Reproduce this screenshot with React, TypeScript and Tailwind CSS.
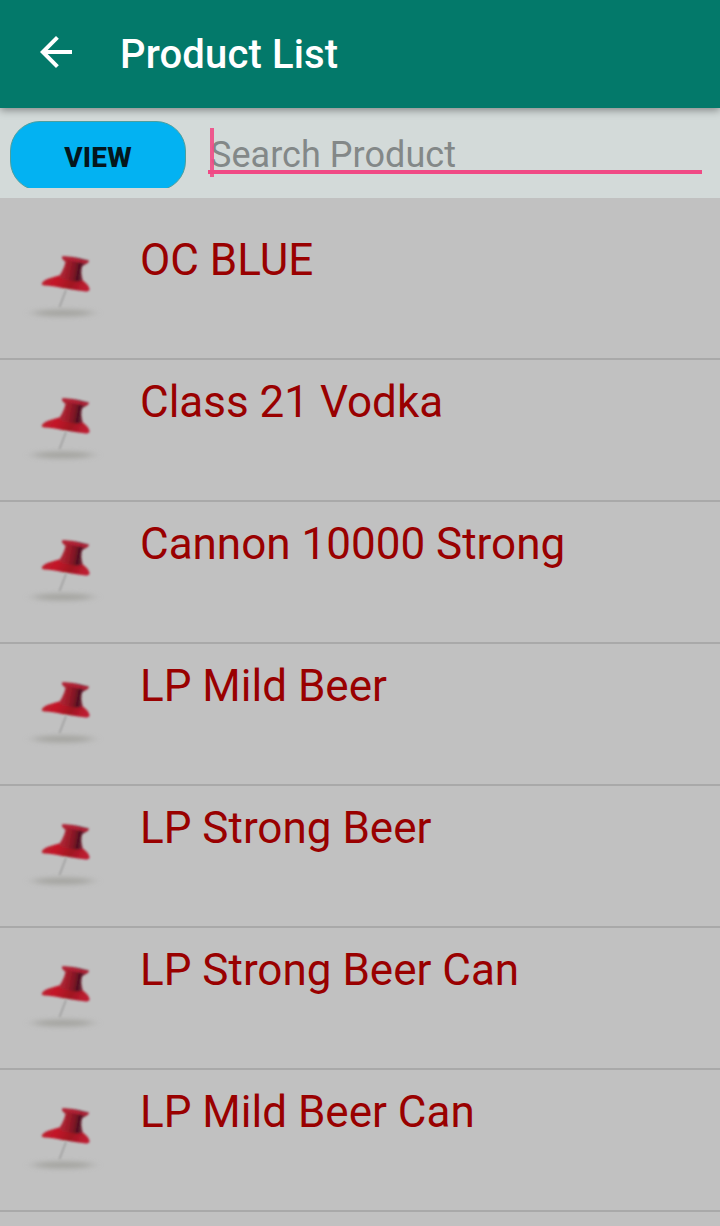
import React from 'react';

const products = [
  'OC BLUE',
  'Class 21 Vodka',
  'Cannon 10000 Strong',
  'LP Mild Beer',
  'LP Strong Beer',
  'LP Strong Beer Can',
  'LP Mild Beer Can',
];

const BackArrow: React.FC = () => (
  <svg className="h-8 w-8" viewBox="0 0 16 16" fill="#fff">
    <path d="M16 7H3.83l5.59-5.59L8 0 0 8l8 8 1.41-1.41L3.83 9H16V7z" />
  </svg>
);

// Shared gradients and blurs, defined once for every pin in the list
const PinDefs: React.FC = () => (
  <svg className="absolute h-0 w-0" aria-hidden="true">
    <defs>
      <linearGradient id="pinBase" x1="0" y1="0" x2="1" y2="0.2">
        <stop offset="0" stopColor="#b82834" />
        <stop offset="0.35" stopColor="#c41628" />
        <stop offset="0.7" stopColor="#a01222" />
        <stop offset="1" stopColor="#bc1e30" />
      </linearGradient>
      <linearGradient id="pinNeck" x1="0" y1="0" x2="1" y2="0.15">
        <stop offset="0" stopColor="#bc3040" />
        <stop offset="0.4" stopColor="#9e1c2a" />
        <stop offset="0.62" stopColor="#7a1424" />
        <stop offset="0.74" stopColor="#4a1020" />
        <stop offset="0.84" stopColor="#702434" />
        <stop offset="1" stopColor="#a03848" />
      </linearGradient>
      <filter id="pinSoft" x="-20%" y="-20%" width="140%" height="140%">
        <feGaussianBlur stdDeviation="1.25" />
      </filter>
      <filter id="pinShadow" x="-30%" y="-150%" width="160%" height="400%">
        <feGaussianBlur stdDeviation="6 2.4" />
      </filter>
    </defs>
  </svg>
);

const PushPin: React.FC = () => (
  <svg className="h-[90px] w-[90px] shrink-0" viewBox="0 0 90 90">
    <ellipse cx="43" cy="73" rx="30" ry="3.4" fill="#969690" opacity="0.65" filter="url(#pinShadow)" />
    <g filter="url(#pinSoft)">
      <path d="M46 50L39.500 67" stroke="#999" strokeWidth="1.4" fill="none" />
      <path d="M22 43C25 38.500 32 38 39 35.500L61 39C65 42.500 69.500 45.500 69.500 49.500C69 52 66 51.500 62 51C48 49.500 36 46 24 45.500C22 45 21.500 44.500 22 43Z" fill="url(#pinBase)" />
      <path d="M42 16.500C50 15.500 61 19 69 20.500C69 23 66 24 62.500 26C60.500 30 61.500 36 63 40.500C55 43 45 40 38.500 37C43 31 44.500 26 45.500 22C43 20 41.500 18.500 42 16.500Z" fill="url(#pinNeck)" />
      <path d="M42 16.800C50 16 61 19.500 69 21.500L66 23.500C58 22.500 49 20 43.500 19.500Z" fill="#b02236" />
    </g>
  </svg>
);

const App: React.FC = () => {
  return (
    <div className="relative flex h-[1226px] w-[720px] flex-col overflow-hidden bg-[#c1c1c1] font-['Roboto',sans-serif]">
      <PinDefs />

      <header className="z-10 flex h-[108px] shrink-0 items-center bg-[#03796a] pl-10 shadow-[0_2px_8px_rgba(0,0,0,0.4)]">
        <div className="-mt-1">
          <BackArrow />
        </div>
        <h1 className="ml-12 pt-[2px] text-[40px] font-medium leading-[48px] tracking-[0.15px] text-white">Product List</h1>
      </header>

      <div className="flex h-[90px] shrink-0 bg-[#d3dad9] pl-[10px] pr-[18px]">
        <div className="mt-[13px] h-[67px] w-[176px] overflow-hidden">
          <button className="block h-[70px] w-full rounded-[30px] border border-[#4c9f9f] bg-[#03b2f2] pt-[3px] text-[28px] font-extrabold tracking-[0.2px] text-[#04161c]">
            VIEW
          </button>
        </div>
        <div className="relative ml-[22px] mt-5 h-[46px] flex-1 border-b-4 border-[#f04a85]">
          <input
            type="text"
            placeholder="Search Product"
            className="block h-[42px] w-full bg-transparent pl-[2px] pt-[11px] text-[36px] leading-[42px] tracking-[0.05px] outline-none placeholder:text-[#838888]"
          />
          <div className="absolute left-[2px] top-0 h-[49px] w-1 bg-[#f04a85]/90" />
        </div>
      </div>

      <ul className="pt-5">
        {products.map((product) => (
          <li key={product} className="flex h-[142px] border-b-2 border-[#a9a9a9] pl-5">
            <div className="pt-[22px]">
              <PushPin />
            </div>
            <span className="ml-[30px] pt-4 text-[44px] leading-[52px] text-[#990000]">{product}</span>
          </li>
        ))}
      </ul>
    </div>
  );
};

export default App;
